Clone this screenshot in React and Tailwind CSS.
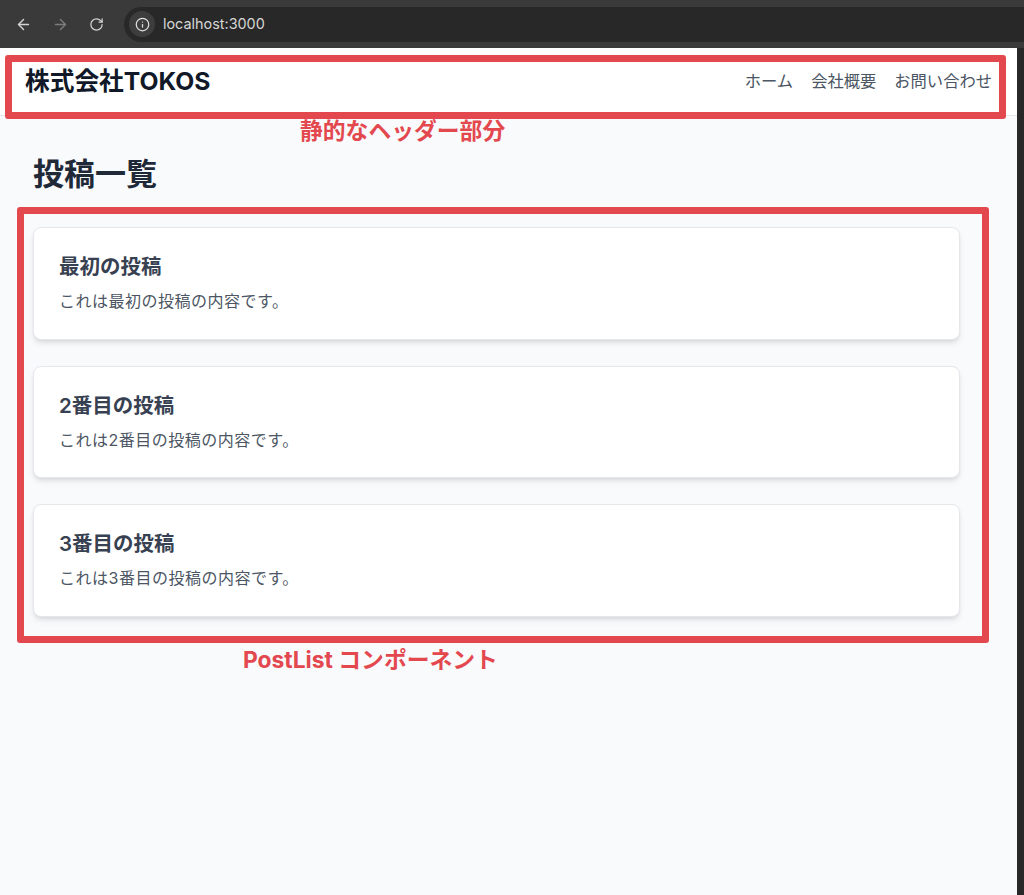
import React from 'react';
import { ArrowLeft, ArrowRight, RotateCw, Info } from 'lucide-react';

const posts = [
  { title: '最初の投稿', body: 'これは最初の投稿の内容です。' },
  { title: '2番目の投稿', body: 'これは2番目の投稿の内容です。' },
  { title: '3番目の投稿', body: 'これは3番目の投稿の内容です。' },
];

const font = "font-['Inter','Noto_Sans_CJK_JP',sans-serif]";

export default function App() {
  return (
    <div className={`relative h-[895px] w-[1024px] overflow-hidden bg-[#282828] ${font}`}>
      {/* Browser toolbar */}
      <div className="flex h-[48px] items-center bg-[#3a3a3a] pl-[15px]">
        <ArrowLeft className="h-[17px] w-[17px] text-[#d4d4d4]" strokeWidth={2} />
        <ArrowRight className="ml-[20px] h-[17px] w-[17px] text-[#7c7c7c]" strokeWidth={2} />
        <RotateCw className="ml-[20px] h-[15px] w-[15px] text-[#d4d4d4]" strokeWidth={2} />
        <div className="ml-[20px] flex h-[35px] flex-1 items-center rounded-l-full bg-[#282828] pl-[5px]">
          <div className="flex h-[26px] w-[26px] items-center justify-center rounded-full bg-[#3d3d3d]">
            <Info className="h-[15px] w-[15px] text-[#e0e0e0]" strokeWidth={2} />
          </div>
          <span className="ml-[8px] text-[14.4px] text-[#d6d6d6]">localhost:3000</span>
        </div>
      </div>

      {/* Page */}
      <div className="h-[847px] w-[1017px] bg-[#f8fafc]">
        <header className="flex h-[68px] items-start justify-between border-b border-[#e5e7eb] bg-white pl-[25px] pr-[25px] pt-[15px]">
          <h1 className="text-[24.7px] font-bold leading-[36px] text-[#111827]">株式会社TOKOS</h1>
          <nav className="flex gap-[18px] pt-[6px] text-[16.3px] leading-[24px] text-[#4b5563]">
            <a>ホーム</a>
            <a>会社概要</a>
            <a>お問い合わせ</a>
          </nav>
        </header>
        <main className="pl-[33px] pr-[57px] pt-[36px]">
          <h2 className="text-[31px] font-bold leading-[44px] text-[#1f2937]">投稿一覧</h2>
          <div className="mt-[31px] flex flex-col gap-[26px]">
            {posts.map((post) => (
              <article
                key={post.title}
                className="h-[112.5px] rounded-lg border border-[#e5e7eb] bg-white px-[25px] pt-[23px] shadow-md"
              >
                <h3 className="text-[20.5px] font-semibold leading-[32px] text-[#374151]">{post.title}</h3>
                <p className="mt-[5px] text-[16px] tracking-[0.5px] leading-[26px] text-[#4b5563]">{post.body}</p>
              </article>
            ))}
          </div>
        </main>
      </div>

      {/* Annotations */}
      <div className="absolute left-[5px] top-[55px] h-[64px] w-[1001px] rounded-[3px] border-[7px] border-[#e4484f]" />
      <div className="absolute left-[300px] top-[115px] text-[22.8px] font-bold leading-[32px] whitespace-nowrap text-[#e4484f]">
        静的なヘッダー部分
      </div>
      <div className="absolute left-[17px] top-[207px] h-[436px] w-[972px] rounded-[3px] border-[7px] border-[#e4484f]" />
      <div className="absolute left-[243px] top-[644px] text-[22.8px] font-bold leading-[32px] whitespace-nowrap text-[#e4484f]">
        PostList コンポーネント
      </div>
    </div>
  );
}
